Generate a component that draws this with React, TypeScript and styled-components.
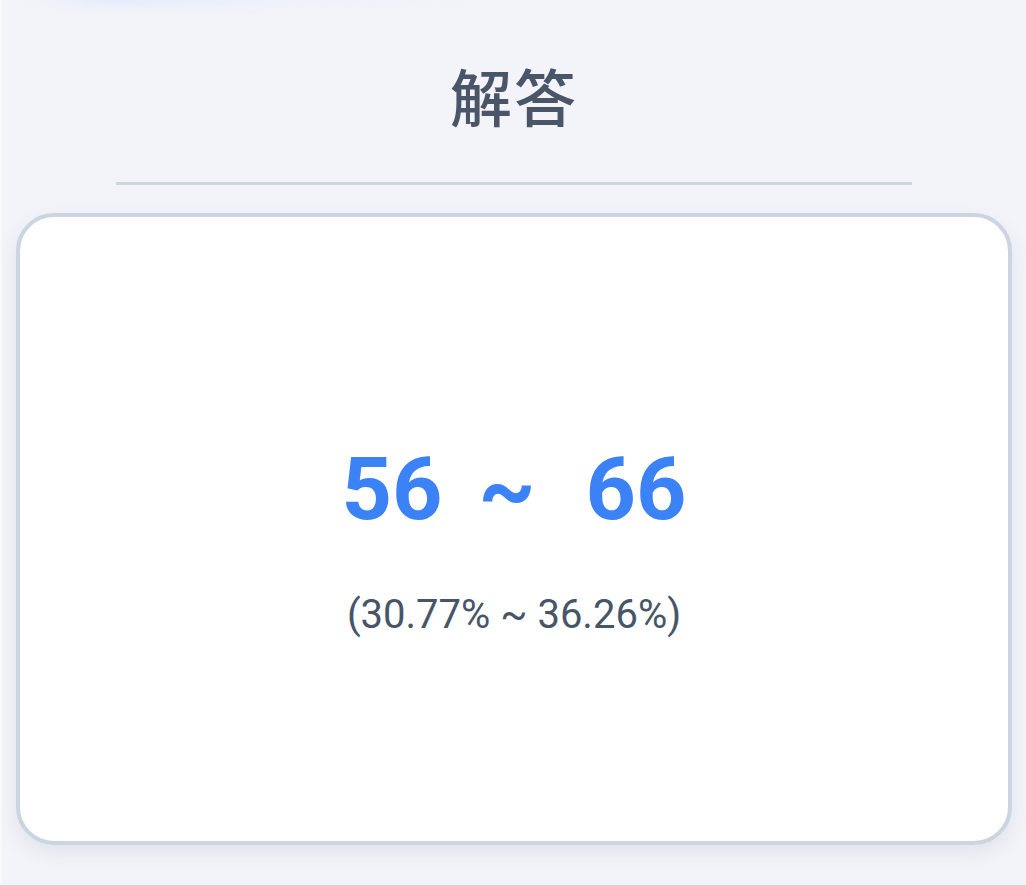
import React from "react";
import styled, { createGlobalStyle } from "styled-components";

const GlobalStyle = createGlobalStyle`
  html, body {
    margin: 0;
    padding: 0;
    background: #f3f4f9;
  }
  body {
    font-family: Roboto, "Noto Sans CJK SC", sans-serif;
  }
`;

const Page = styled.div`
  width: 1026px;
  height: 885px;
  box-sizing: border-box;
  border-left: 2px solid #f9f9fc;
  background: #f3f4f9;
  display: flex;
  flex-direction: column;
  align-items: center;
  overflow: hidden;
`;

const TopFade = styled.div`
  align-self: flex-start;
  width: 460px;
  height: 14px;
  margin: -8px 0 0 20px;
  border-radius: 0 0 40px 40px;
  background: linear-gradient(90deg, rgba(226, 234, 252, 0) 0%, rgba(226, 234, 252, 0.9) 20%, rgba(236, 240, 252, 0.7) 60%, rgba(226, 234, 252, 0) 100%);
  filter: blur(4px);
`;

const Title = styled.h2`
  margin: 44px 0 0;
  font-family: "Noto Sans CJK SC", sans-serif;
  font-size: 62px;
  font-weight: 500;
  line-height: 90px;
  color: #4a5568;
  letter-spacing: 2px;
`;

const Divider = styled.hr`
  width: 796px;
  margin: 42px 0 0;
  border: none;
  border-top: 3px solid #cfd5dd;
`;

const Card = styled.div`
  margin-top: 28px;
  width: 996px;
  height: 632px;
  box-sizing: border-box;
  background: #fff;
  border: 4px solid #cbd5e1;
  border-radius: 38px;
  box-shadow: 0 8px 20px rgba(100, 116, 139, 0.12);
  display: flex;
  flex-direction: column;
  align-items: center;
  justify-content: center;
  padding-top: 24px;
`;

const Range = styled.div`
  display: flex;
  align-items: baseline;
  font-family: Roboto, sans-serif;
  font-weight: 700;
  font-size: 88px;
  line-height: 1;
  color: #3b82f6;
`;

const Tilde = styled.span<{ gapLeft: number; gapRight: number }>`
  margin: 0 ${(p) => p.gapRight}px 0 ${(p) => p.gapLeft}px;
`;

const Percent = styled.div`
  margin-top: 58px;
  font-family: Roboto, sans-serif;
  font-size: 40px;
  color: #475569;
`;

export default function App() {
  const low = 56;
  const high = 66;
  const total = 182;
  const pct = (n: number) => ((n / total) * 100).toFixed(2) + "%";

  return (
    <>
      <GlobalStyle />
      <Page>
        <TopFade />
        <Title>解答</Title>
        <Divider />
        <Card>
          <Range>
            <span>{low}</span>
            <Tilde gapLeft={36} gapRight={50}>~</Tilde>
            <span>{high}</span>
          </Range>
          <Percent>
            ({pct(low)} ~ {pct(high)})
          </Percent>
        </Card>
      </Page>
    </>
  );
}
